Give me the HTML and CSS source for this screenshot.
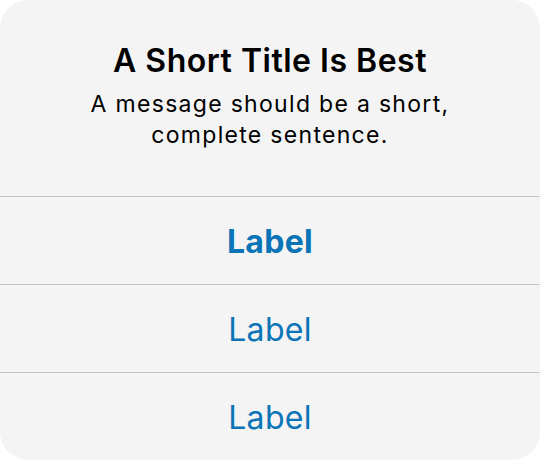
FILE: index.html
```html
<!DOCTYPE html>
<html lang="en">
<head>
<meta charset="utf-8">
<title>Alert</title>
<link rel="stylesheet" href="styles.css">
</head>
<body>
<div class="alert">
  <div class="alert-header">
    <h1 class="alert-title">A Short Title Is Best</h1>
    <p class="alert-message">A message should be a short,<br>complete sentence.</p>
  </div>
  <button class="alert-action alert-action--primary">Label</button>
  <button class="alert-action">Label</button>
  <button class="alert-action">Label</button>
</div>
</body>
</html>
```

FILE: styles.css
```css
html, body {
  margin: 0;
  padding: 0;
  background: #ffffff;
}
body {
  width: 540px;
  height: 460px;
  font-family: Inter, "Noto Sans", sans-serif;
}
.alert {
  width: 540px;
  height: 460px;
  background: #f4f4f4;
  border-radius: 28px;
  display: flex;
  flex-direction: column;
  overflow: hidden;
}
.alert-header {
  height: 196px;
  box-sizing: border-box;
  padding-top: 41px;
  text-align: center;
}
.alert-title {
  margin: 0;
  font-size: 32px;
  line-height: 40px;
  font-weight: 600;
  letter-spacing: 0.5px;
  color: #000;
}
.alert-message {
  margin: 0;
  margin-top: 8px;
  font-size: 23px;
  line-height: 31px;
  font-weight: 400;
  letter-spacing: 1.3px;
  color: #000;
}
.alert-action {
  display: block;
  width: 100%;
  height: 88px;
  box-sizing: border-box;
  border: 0;
  border-top: 1px solid #c4c4c4;
  background: transparent;
  font-family: inherit;
  font-size: 32px;
  font-weight: 400;
  letter-spacing: 0.3px;
  color: #0a74b6;
  padding: 2px 0 0;
}
.alert-action--primary {
  font-weight: 700;
}
```
